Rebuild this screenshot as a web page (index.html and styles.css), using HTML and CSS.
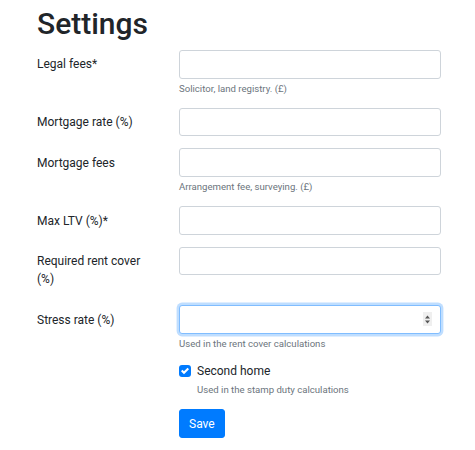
FILE: index.html
```html
<!DOCTYPE html>
<html lang="en">
<head>
    <meta charset="UTF-8">
    <meta name="viewport" content="width=device-width, initial-scale=1.0">
    <title>Settings</title>
    <link rel="stylesheet" href="styles.css">
</head>
<body>
    <div class="page">
        <h1>Settings</h1>
        <form class="settings">
            <div class="form-row">
                <label for="legal">Legal fees*</label>
                <div class="field">
                    <input type="text" id="legal">
                    <small class="help">Solicitor, land registry. (&pound;)</small>
                </div>
            </div>
            <div class="form-row">
                <label for="rate">Mortgage rate (%)</label>
                <div class="field">
                    <input type="text" id="rate">
                </div>
            </div>
            <div class="form-row">
                <label for="fees">Mortgage fees</label>
                <div class="field">
                    <input type="text" id="fees">
                    <small class="help">Arrangement fee, surveying. (&pound;)</small>
                </div>
            </div>
            <div class="form-row">
                <label for="ltv">Max LTV (%)*</label>
                <div class="field">
                    <input type="text" id="ltv">
                </div>
            </div>
            <div class="form-row">
                <label for="cover">Required rent cover (%)</label>
                <div class="field">
                    <input type="text" id="cover">
                </div>
            </div>
            <div class="form-row">
                <label for="stress">Stress rate (%)</label>
                <div class="field">
                    <div class="number">
                        <input type="number" id="stress" class="focused">
                        <span class="spin">
                            <svg width="5" height="9" viewBox="0 0 5 9"><path fill="#555" d="M2.5 0.5L5 3.5H0z M0 5.5h5L2.5 8.5z"/></svg>
                        </span>
                    </div>
                    <small class="help">Used in the rent cover calculations</small>
                </div>
            </div>
            <div class="form-row check-row">
                <div></div>
                <div class="field">
                    <div class="check">
                        <span class="box">
                            <svg width="8" height="8" viewBox="0 0 8 8"><path fill="#fff" d="M6.564.75l-3.59 3.612-1.538-1.55L0 4.26l2.974 2.99L8 2.193z"/></svg>
                        </span>
                        <span>Second home</span>
                    </div>
                    <small class="help indent">Used in the stamp duty calculations</small>
                </div>
            </div>
            <div class="form-row">
                <div></div>
                <div class="field">
                    <button type="button" class="save">Save</button>
                </div>
            </div>
        </form>
    </div>
</body>
</html>
```

FILE: styles.css
```css
* {
    box-sizing: border-box;
}

body {
    margin: 0;
    font-family: Roboto, "Liberation Sans", sans-serif;
    font-size: 12px;
    line-height: 18px;
    color: #212529;
    background-color: #fff;
}

.page {
    padding: 6px 34px 0 37px;
}

h1 {
    font-size: 30px;
    font-weight: 500;
    line-height: 36px;
    margin: 0 0 8px;
}

.form-row {
    display: grid;
    grid-template-columns: 112px 262px;
    column-gap: 30px;
    margin-bottom: 12px;
}

.form-row label {
    padding: 5.25px 0;
}

input {
    display: block;
    width: 100%;
    height: 28.5px;
    padding: 4.5px 9px;
    font-family: inherit;
    font-size: 12px;
    color: #495057;
    border: 1px solid #ced4da;
    border-radius: 3px;
    outline: none;
}

input.focused,
input:focus {
    border-color: #80bdff;
    box-shadow: 0 0 0 2.4px rgba(0, 123, 255, 0.25);
}

.number {
    position: relative;
}

.number input {
    -moz-appearance: textfield;
}

.number input::-webkit-inner-spin-button,
.number input::-webkit-outer-spin-button {
    -webkit-appearance: none;
    margin: 0;
}

.spin {
    position: absolute;
    right: 9px;
    top: 7px;
    width: 9px;
    height: 14px;
    background-color: #efefef;
    display: flex;
    align-items: center;
    justify-content: center;
}

.help {
    display: block;
    margin-top: 3px;
    font-size: 9.6px;
    line-height: 14.4px;
    color: #6c757d;
}

.indent {
    padding-left: 18px;
}

.check-row {
    margin-top: -1.5px;
}

.check {
    display: flex;
    align-items: center;
    gap: 6px;
}

.box {
    width: 12px;
    height: 12px;
    border-radius: 3px;
    background-color: #007bff;
    display: flex;
    align-items: center;
    justify-content: center;
}

.save {
    font-family: inherit;
    font-size: 12px;
    line-height: 18px;
    padding: 4.5px 9px;
    color: #fff;
    background-color: #007bff;
    border: 1px solid #007bff;
    border-radius: 3px;
}
```
